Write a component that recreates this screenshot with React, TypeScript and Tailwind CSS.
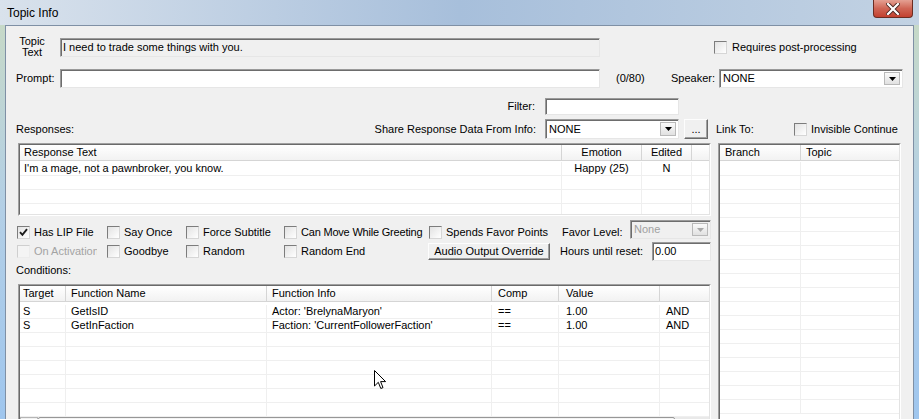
import React from 'react'

type Col = { w: string; label: string; center?: boolean; pad: string }

function Check({ checked = false, disabled = false }: { checked?: boolean; disabled?: boolean }) {
  return (
    <span
      className={
        disabled
          ? 'flex h-[13px] w-[13px] shrink-0 border border-[#cfcfcf] border-b-[#ececec] border-r-[#ececec] bg-[#f4f4f4]'
          : 'flex h-[13px] w-[13px] shrink-0 items-center justify-center border border-[#7c7c7c] border-b-[#d6d6d6] border-r-[#d6d6d6] bg-linear-to-br from-[#e2e2e2] to-white'
      }
    >
      {checked && (
        <svg width="9" height="9" viewBox="0 0 9 9">
          <path d="M1 4.2 L3.4 6.8 L8 1.2" fill="none" stroke="#1b1b1b" strokeWidth="1.9" />
        </svg>
      )}
    </span>
  )
}

function CheckItem({
  label,
  checked,
  disabled,
  className,
  labelClass = '',
}: {
  label: string
  checked?: boolean
  disabled?: boolean
  className: string
  labelClass?: string
}) {
  return (
    <div className={`flex shrink-0 items-center gap-[4px] ${className}`}>
      <Check checked={checked} disabled={disabled} />
      <span className={`whitespace-nowrap ${disabled ? 'text-[#a3a3a3]' : ''} ${labelClass}`}>{label}</span>
    </div>
  )
}

function Field({ value = '', className, readOnly }: { value?: string; className: string; readOnly?: boolean }) {
  return (
    <div
      className={`flex shrink-0 items-center border border-[#9a9a9a] border-b-[#e6e6e6] border-r-[#e6e6e6] pl-[2px] shadow-[inset_1px_1px_0_#6d6d6d] ${
        readOnly ? 'bg-[#f0f0f0]' : 'bg-white'
      } ${className}`}
    >
      <span className="whitespace-nowrap">{value}</span>
    </div>
  )
}

function Combo({ value, className, disabled }: { value: string; className: string; disabled?: boolean }) {
  return (
    <div
      className={`flex shrink-0 items-stretch border border-[#9a9a9a] border-b-[#e6e6e6] border-r-[#e6e6e6] shadow-[inset_1px_1px_0_#6d6d6d] ${
        disabled ? 'bg-[#f0f0f0] text-[#a0a0a0]' : 'bg-white'
      } ${className}`}
    >
      <span className="flex flex-1 items-center pl-[3px]">{value}</span>
      <span className="my-[2px] mr-[2px] flex w-[16px] items-center justify-center border border-[#b9b9b9] bg-linear-to-b from-[#fafafa] to-[#e1e1e1]">
        <svg width="7" height="4" viewBox="0 0 7 4">
          <path d="M0 0 H7 L3.5 4 Z" fill={disabled ? '#a8a8a8' : '#000'} />
        </svg>
      </span>
    </div>
  )
}

function Button({ label, className }: { label: string; className: string }) {
  return (
    <div
      className={`flex shrink-0 items-center justify-center border border-[#fdfdfd] border-b-[#6a6a6a] border-r-[#6a6a6a] bg-[#f0f0f0] shadow-[inset_-1px_-1px_0_#a0a0a0] ${className}`}
    >
      {label}
    </div>
  )
}

function Grid({ cols, rows, count, pt }: { cols: Col[]; rows: string[][]; count: number; pt: string }) {
  const lines = Array.from({ length: count }, (_, i) => rows[i] ?? cols.map(() => ''))
  return (
    <>
      <div className="flex h-[16px] shrink-0 border-b border-[#d5d5d5] bg-linear-to-b from-white to-[#f2f2f2]">
        {cols.map((c, i) => (
          <div
            key={i}
            className={`flex shrink-0 items-center border-r border-[#d5d5d5] ${c.center ? 'justify-center' : c.pad} ${c.w}`}
          >
            {c.label}
          </div>
        ))}
      </div>
      <div className={`flex shrink-0 flex-col ${pt}`}>
        {lines.map((r, ri) => (
          <div key={ri} className="flex h-[14px] shrink-0 border-b border-[#efefef]">
            {cols.map((c, ci) => (
              <div
                key={ci}
                className={`flex shrink-0 items-center whitespace-nowrap border-r border-[#efefef] ${c.center ? 'justify-center' : c.pad} ${c.w}`}
              >
                {r[ci]}
              </div>
            ))}
          </div>
        ))}
      </div>
    </>
  )
}

function ListBox({ className, children }: { className: string; children: React.ReactNode }) {
  return (
    <div className={`shrink-0 overflow-hidden border border-[#a0a0a0] border-b-white border-r-white ${className}`}>
      <div className="flex h-full flex-col overflow-hidden border border-[#6a6a6a] border-b-[#e3e3e3] border-r-[#e3e3e3] bg-white">
        {children}
      </div>
    </div>
  )
}

function TitleBar() {
  return (
    <div className="flex h-[25px] items-start bg-linear-to-r from-[#d9e2ec] via-[#a7bfdb] to-[#c2d2e3]">
      <span className="pl-[7px] pt-[5px] text-[12px] leading-[16px] text-black">Topic Info</span>
      <div className="ml-auto mr-[6px] flex h-[18px] w-[40px] items-center justify-center rounded-b-[4px] border border-t-0 border-[#6b2c22] bg-linear-to-b from-[#e4a093] via-[#cf6555] to-[#c3402f]">
        <svg width="14" height="12" viewBox="0 0 14 12">
          <path d="M2 1 L12 11 M12 1 L2 11" stroke="#4a2420" strokeWidth="4" strokeLinecap="square" />
          <path d="M2 1 L12 11 M12 1 L2 11" stroke="#ffffff" strokeWidth="2.2" strokeLinecap="square" />
        </svg>
      </div>
    </div>
  )
}

function Cursor() {
  return (
    <svg className="absolute left-[356px] top-[86px]" width="13" height="20" viewBox="0 0 13 20">
      <path d="M0.5 0.5 L0.5 16 L4.3 12.3 L6.8 18.5 L9 17.6 L6.6 11.6 L11.6 11.6 Z" fill="#ffffff" stroke="#000000" strokeWidth="1" />
    </svg>
  )
}

const responseCols: Col[] = [
  { w: 'w-[542px]', label: 'Response Text', pad: 'pl-[4px]' },
  { w: 'w-[80px]', label: 'Emotion', center: true, pad: '' },
  { w: 'w-[50px]', label: 'Edited', center: true, pad: '' },
  { w: 'w-[20px]', label: '', pad: '' },
]

const conditionCols: Col[] = [
  { w: 'w-[46px]', label: 'Target', pad: 'pl-[3px]' },
  { w: 'w-[201px]', label: 'Function Name', pad: 'pl-[5px]' },
  { w: 'w-[225px]', label: 'Function Info', pad: 'pl-[5px]' },
  { w: 'w-[67px]', label: 'Comp', pad: 'pl-[6px]' },
  { w: 'w-[101px]', label: 'Value', pad: 'pl-[7px]' },
  { w: 'w-[60px]', label: '', pad: 'pl-[6px]' },
]

const linkCols: Col[] = [
  { w: 'w-[81px]', label: 'Branch', pad: 'pl-[5px]' },
  { w: 'w-[120px]', label: 'Topic', pad: 'pl-[5px]' },
]

export default function App() {
  return (
    <div className="h-[419px] w-[919px] overflow-hidden bg-linear-to-b from-[#c9dac3] via-[#b3cfe6] to-[#9fc6ee] font-['Liberation_Sans',Arial,sans-serif] text-[11px] leading-[13px] text-black">
      <TitleBar />

      <div className="mx-[5px] flex h-[394px] flex-col border-l border-r border-t border-[#7f90a5] bg-[#f0f0f0] pl-[10px] pt-[10px]">
        {/* Topic text */}
        <div className="flex h-[22px] shrink-0 items-center">
          <div className="ml-[2px] w-[28px] text-center leading-[11px]">
            Topic
            <br />
            Text
          </div>
          <Field readOnly value="I need to trade some things with you." className="ml-[14px] h-[19px] w-[540px]" />
          <CheckItem label="Requires post-processing" className="ml-[114px] gap-[5px]" />
        </div>

        {/* Prompt */}
        <div className="mt-[11px] flex h-[19px] shrink-0 items-center">
          <span className="w-[44px]">Prompt:</span>
          <Field className="h-full w-[540px]" />
          <span className="ml-[16px] w-[55px]">(0/80)</span>
          <span className="w-[48px]">Speaker:</span>
          <Combo value="NONE" className="h-full w-[184px]" />
        </div>

        {/* Filter */}
        <div className="mt-[10px] flex h-[17px] shrink-0 items-center">
          <span className="w-[529px] pr-[10px] text-right">Filter:</span>
          <Field className="h-full w-[134px]" />
        </div>

        {/* Responses header row */}
        <div className="mt-[4px] flex h-[20px] shrink-0 items-center">
          <div className="flex w-[529px] justify-between pr-[9px]">
            <span>Responses:</span>
            <span>Share Response Data From Info:</span>
          </div>
          <Combo value="NONE" className="h-full w-[134px]" />
          <Button label="..." className="ml-[5px] h-full w-[24px]" />
          <span className="ml-[8px] w-[70px]">Link To:</span>
          <CheckItem label="Invisible Continue" className="ml-[8px]" />
        </div>

        <div className="mt-[4px] flex min-h-0 flex-1">
          {/* Left column */}
          <div className="flex w-[695px] shrink-0 flex-col">
            <ListBox className="ml-[2px] h-[73px] w-[693px]">
              <Grid
                cols={responseCols}
                rows={[["I'm a mage, not a pawnbroker, you know.", 'Happy (25)', 'N', '']]}
                count={4}
                pt="pt-[1px]"
              />
            </ListBox>

            <div className="mt-[4px] flex h-[19px] shrink-0 items-end">
              <CheckItem checked label="Has LIP File" className="ml-[1px] h-[13px] w-[90px]" />
              <CheckItem label="Say Once" className="h-[13px] w-[79px]" />
              <CheckItem label="Force Subtitle" className="h-[13px] w-[98px]" />
              <CheckItem label="Can Move While Greeting" labelClass="tracking-[-0.2px]" className="h-[13px] w-[145px]" />
              <CheckItem label="Spends Favor Points" className="h-[13px] w-[133px]" />
              <span className="flex h-[13px] w-[68px] items-center">Favor Level:</span>
              <Combo disabled value="None" className="h-[19px] w-[81px]" />
            </div>

            <div className="mt-[3px] flex h-[19px] shrink-0 items-center">
              <CheckItem disabled label="On Activation" labelClass="w-[63px] overflow-hidden" className="ml-[1px] w-[90px]" />
              <CheckItem label="Goodbye" className="w-[79px]" />
              <CheckItem label="Random" className="w-[98px]" />
              <CheckItem label="Random End" className="w-[144px]" />
              <Button label="Audio Output Override" className="h-[17px] w-[122px]" />
              <span className="ml-[10px] w-[92px]">Hours until reset:</span>
              <Field value="0.00" className="h-full w-[59px]" />
            </div>

            <div className="mt-[1px] flex h-[16px] shrink-0 items-center">Conditions:</div>

            <div className="relative ml-[2px] mt-[6px] w-[693px] flex-1">
              <ListBox className="h-[150px] w-[693px]">
                <Grid
                  cols={conditionCols}
                  rows={[
                    ['S', 'GetIsID', "Actor: 'BrelynaMaryon'", '==', '1.00', 'AND'],
                    ['S', 'GetInFaction', "Faction: 'CurrentFollowerFaction'", '==', '1.00', 'AND'],
                  ]}
                  count={8}
                  pt="pt-[3px]"
                />
                <div className="flex h-[17px] shrink-0 bg-[#e9e9e9]">
                  <div className="w-[18px] border border-[#b5b5b5] bg-[#f0f0f0]" />
                  <div className="w-[637px] rounded-[2px] border border-[#979797] bg-linear-to-b from-[#f3f3f3] to-[#dedede]" />
                </div>
              </ListBox>
              <Cursor />
            </div>
          </div>

          {/* Link list */}
          <ListBox className="ml-[7px] h-[290px] w-[183px]">
            <Grid cols={linkCols} rows={[]} count={18} pt="pt-[1px]" />
          </ListBox>
        </div>
      </div>
    </div>
  )
}
